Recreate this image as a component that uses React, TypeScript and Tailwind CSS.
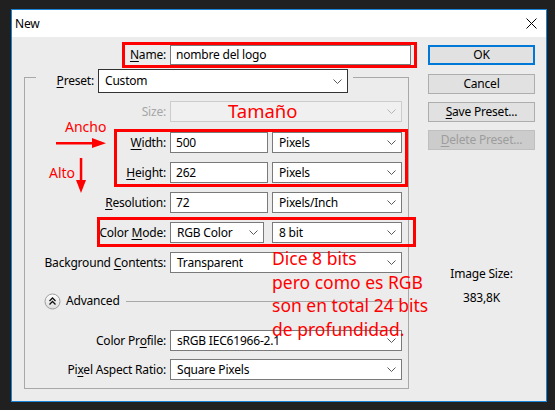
import React from "react";

const U = ({ children }: { children: React.ReactNode }) => (
  <span className="underline underline-offset-[2px] decoration-[1px]">{children}</span>
);

const Chevron = ({ c = "#5a5a5a" }: { c?: string }) => (
  <svg width="9" height="5" viewBox="0 0 9 5" className="shrink-0">
    <path d="M0.5 0.5 L4.5 4.5 L8.5 0.5" fill="none" stroke={c} strokeWidth="1" />
  </svg>
);

const Select = ({
  value,
  w,
  h = "h-[21px]",
  border = "border-[#7a7a7a]",
}: {
  value: string;
  w: string;
  h?: string;
  border?: string;
}) => (
  <div className={`${w} ${h} flex items-center justify-between border ${border} bg-white pl-[6px] pr-[5px] shrink-0`}>
    <span className="whitespace-nowrap leading-[16px]">{value}</span>
    <Chevron />
  </div>
);

const Input = ({ value, w }: { value: string; w: string }) => (
  <div className={`${w} h-[21px] flex items-center border border-[#7a7a7a] bg-white pl-[5px] shrink-0`}>
    <span className="whitespace-nowrap leading-[16px]">{value}</span>
  </div>
);

const Row = ({
  label,
  mt,
  children,
  labelClass = "",
}: {
  label: React.ReactNode;
  mt: string;
  children: React.ReactNode;
  labelClass?: string;
}) => (
  <div className={`${mt} flex items-center`}>
    <div className={`w-[141px] text-right whitespace-nowrap leading-[16px] ${labelClass}`}>{label}</div>
    <div className="ml-[4px] flex items-center">{children}</div>
  </div>
);

const Btn = ({
  children,
  mt,
  cls = "border border-[#adadad] bg-[#e1e1e1] text-black",
}: {
  children: React.ReactNode;
  mt: string;
  cls?: string;
}) => (
  <div className={`${mt} h-[20px] w-[107px] flex items-center justify-center leading-[16px] ${cls}`}>{children}</div>
);

export default function App() {
  return (
    <div className="relative w-[555px] h-[410px] overflow-hidden bg-[#202020] pt-[9px] pl-[11px] font-['Noto_Sans',sans-serif] text-[12px] tracking-[-0.2px] text-black leading-[16px]">
      <div className="w-[536px] h-[393px] border border-[#1883d7] bg-[#ececec] flex flex-col">
        {/* title bar */}
        <div className="h-[27px] bg-white flex items-center justify-between pl-[3px] pr-[9px] shrink-0">
          <span className="text-[12px]">New</span>
          <svg width="11" height="11" viewBox="0 0 11 11">
            <path d="M0.5 0.5 L10.5 10.5 M10.5 0.5 L0.5 10.5" stroke="#000" strokeWidth="1" />
          </svg>
        </div>
        {/* body */}
        <div className="flex flex-1">
          {/* left column */}
          <div className="w-[405px] flex flex-col">
            <div className="mt-[8px] flex items-center">
              <div className="w-[154px] text-right">
                <U>N</U>ame:
              </div>
              <div className="ml-[4px] w-[241px] h-[20px] flex items-center border border-[#7a7a7a] bg-white pl-[5px]">
                nombre del logo
              </div>
            </div>
            {/* group */}
            <div className="mt-[12px] ml-[12px] w-[385px] border border-[#a8a8a8] pb-[8px] flex flex-col">
              <div className="-mt-[9px] ml-[11px] w-fit flex items-center bg-[#ececec] pr-[5px]">
                <div className="w-[58px] text-right">
                  <U>P</U>reset:
                </div>
                <div className="ml-[4px]">
                  <Select value="Custom" w="w-[250px]" h="h-[24px]" border="border-[#333333]" />
                </div>
              </div>
              <Row label="Size:" mt="mt-[8px]" labelClass="text-[#a6a6a6]">
                <div className="w-[232px] h-[21px] flex items-center justify-end border border-[#cccccc] bg-[#f0f0f0] pr-[5px]">
                  <Chevron c="#b5b5b5" />
                </div>
              </Row>
              <Row label={<><U>W</U>idth:</>} mt="mt-[10px]">
                <Input value="500" w="w-[98px]" />
                <div className="ml-[4px]">
                  <Select value="Pixels" w="w-[130px]" />
                </div>
              </Row>
              <Row label={<><U>H</U>eight:</>} mt="mt-[9px]">
                <Input value="262" w="w-[98px]" />
                <div className="ml-[4px]">
                  <Select value="Pixels" w="w-[130px]" />
                </div>
              </Row>
              <Row label={<><U>R</U>esolution:</>} mt="mt-[9px]">
                <Input value="72" w="w-[98px]" />
                <div className="ml-[4px]">
                  <Select value="Pixels/Inch" w="w-[130px]" />
                </div>
              </Row>
              <Row label={<>Color <U>M</U>ode:</>} mt="mt-[9px]">
                <Select value="RGB Color" w="w-[94px]" />
                <div className="ml-[8px]">
                  <Select value="8 bit" w="w-[130px]" />
                </div>
              </Row>
              <Row label={<>Background <U>C</U>ontents:</>} mt="mt-[9px]">
                <Select value="Transparent" w="w-[232px]" />
              </Row>
              <div className="mt-[20px] h-[16px] flex items-center ml-[19px] mr-[6px]">
                <svg width="17" height="17" viewBox="0 0 17 17" className="shrink-0">
                  <defs>
                    <linearGradient id="adv" x1="0" y1="0" x2="0" y2="1">
                      <stop offset="0" stopColor="#ffffff" />
                      <stop offset="1" stopColor="#dcdcdc" />
                    </linearGradient>
                  </defs>
                  <circle cx="8.5" cy="8.5" r="7.5" fill="url(#adv)" stroke="#9d9d9d" strokeWidth="1" />
                  <path d="M5.5 8 L8.5 5 L11.5 8 M5.5 11.5 L8.5 8.5 L11.5 11.5" fill="none" stroke="#111" strokeWidth="1.3" />
                </svg>
                <span className="ml-[5px] whitespace-nowrap">Advanced</span>
                <div className="ml-[6px] flex-1 border-t border-[#a8a8a8]" />
              </div>
              <Row label={<>Color Pr<U>o</U>file:</>} mt="mt-[21px]">
                <Select value="sRGB IEC61966-2.1" w="w-[232px]" />
              </Row>
              <Row label={<>Pi<U>x</U>el Aspect Ratio:</>} mt="mt-[8px]">
                <Select value="Square Pixels" w="w-[232px]" />
              </Row>
            </div>
          </div>
          {/* right column */}
          <div className="ml-[11px] w-[107px] flex flex-col">
            <Btn mt="mt-[8px]" cls="border-2 border-[#0078d7] bg-[#e1e1e1] text-black">OK</Btn>
            <Btn mt="mt-[9px]">Cancel</Btn>
            <Btn mt="mt-[8px]">
              <span>
                <U>S</U>ave Preset...
              </span>
            </Btn>
            <Btn mt="mt-[8px]" cls="border border-[#bfbfbf] bg-[#cccccc] text-[#9d9d9d]">
              <span>
                <U>D</U>elete Preset...
              </span>
            </Btn>
            <div className="mt-[116px] text-center">Image Size:</div>
            <div className="mt-[8px] text-center">383,8K</div>
          </div>
        </div>
      </div>

      {/* annotations */}
      <div className="absolute left-[122px] top-[42px] w-[295px] h-[26px] border-[3px] border-[#ff0000]" />
      <div className="absolute left-[114px] top-[129px] w-[294px] h-[58px] border-[3px] border-[#ff0000]" />
      <div className="absolute left-[97px] top-[217px] w-[319px] h-[30px] border-[3px] border-[#ff0000]" />

      <div className="absolute left-[228px] top-[99px] text-[18.5px] leading-[24px] tracking-normal text-[#ff0000]">
        Tamaño
      </div>
      <div className="absolute left-[65px] top-[118px] text-[14px] leading-[18px] tracking-normal text-[#ff0000]">
        Ancho
      </div>
      <div className="absolute left-[49px] top-[164px] text-[14px] leading-[18px] tracking-normal text-[#ff0000]">
        Alto
      </div>
      <svg className="absolute left-[55px] top-[137px]" width="52" height="12" viewBox="0 0 52 12">
        <rect x="1" y="5" width="38" height="2.5" fill="#ff0000" />
        <path d="M37 1 L51 6.2 L37 11 Z" fill="#ff0000" />
      </svg>
      <svg className="absolute left-[75px] top-[157px]" width="12" height="37" viewBox="0 0 12 37">
        <rect x="4.8" y="1" width="2.5" height="24" fill="#ff0000" />
        <path d="M1 23 L6 36 L11 23 Z" fill="#ff0000" />
      </svg>
      <div className="absolute left-[272px] top-[247px] text-[17.5px] leading-[23.7px] tracking-normal text-[#ff0000] whitespace-nowrap">
        <div>Dice 8 bits</div>
        <div>pero como es RGB</div>
        <div>son en total 24 bits</div>
        <div>de profundidad.</div>
      </div>
    </div>
  );
}
